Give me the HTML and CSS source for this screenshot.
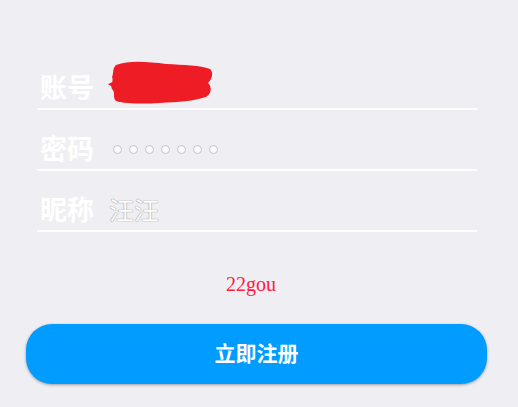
FILE: index.html
```html
<!DOCTYPE html>
<html lang="zh">
<head>
  <meta charset="UTF-8">
  <title>注册</title>
  <meta name="viewport" content="width=device-width, initial-scale=1.0">
  <link rel="stylesheet" href="styles.css">
</head>
<body>

  <div class="form">
    <div class="row">
      <span class="label">账号</span>
      <span class="value account">
        <svg class="scribble" width="108" height="46" viewBox="0 0 108 46">
          <path d="M8 6 C22 1 40 3 58 5 C76 6 92 6 102 10 C106 14 104 20 100 24 C104 28 104 34 98 38 C86 42 70 43 52 44 C36 45 18 45 8 42 C4 38 8 34 4 30 C2 26 6 22 4 18 C6 14 4 10 8 6 Z" fill="#ee1c25"/>
          <path d="M0 25 L12 20 L10 32 Z" fill="#ee1c25"/>
        </svg>
      </span>
    </div>
    <div class="row">
      <span class="label">密码</span>
      <span class="value dots">
        <i></i><i></i><i></i><i></i><i></i><i></i><i></i>
      </span>
    </div>
    <div class="row">
      <span class="label">昵称</span>
      <span class="value nick">汪汪</span>
    </div>

    <p class="tip">22gou</p>
  </div>

  <button class="submit">立即注册</button>

</body>
</html>
```

FILE: styles.css
```css
* {
  box-sizing: border-box;
  margin: 0;
  padding: 0;
}

body {
  background-color: #efeef3;
  font-family: "Noto Sans CJK SC", "Noto Sans", sans-serif;
  width: 518px;
  height: 407px;
  overflow: hidden;
}

.form {
  margin: 0 41px 0 37px;
  padding-top: 49px;
}

.row {
  height: 61px;
  display: flex;
  align-items: flex-end;
  padding: 0 0 6px 3px;
  border-bottom: 2px solid #fff;
}

.label {
  font-size: 27px;
  line-height: 30px;
  font-weight: 700;
  color: #fff;
}

.value {
  margin-left: 15px;
  height: 30px;
  display: flex;
  align-items: center;
}

.account {
  position: relative;
  width: 108px;
}

.scribble {
  position: absolute;
  left: -1px;
  top: -13px;
}

.dots {
  gap: 7px;
  margin-left: 19px;
  padding-top: 2px;
}

.dots i {
  display: block;
  width: 9px;
  height: 9px;
  border-radius: 50%;
  border: 1px solid #c4c4c8;
  background: #fafafa;
}

.nick {
  font-size: 25px;
  color: #fff;
  text-shadow: 0 0 1px #8a8a8a, 0 0 1px #8a8a8a;
}

.tip {
  margin-top: 40px;
  text-align: center;
  padding-right: 12px;
  font-family: "Liberation Serif", "DejaVu Serif", serif;
  font-size: 20px;
  color: #ff1a3d;
  line-height: 24px;
}

.submit {
  display: block;
  margin: 28px 0 0 26px;
  width: 461px;
  height: 60px;
  padding-bottom: 5px;
  border: none;
  border-radius: 26px;
  background-color: #009cff;
  color: #fff;
  font-family: "Noto Sans CJK SC", "Noto Sans", sans-serif;
  font-size: 21px;
  font-weight: 700;
  box-shadow: 0 1px 3px rgba(0, 0, 0, 0.35);
}
```
